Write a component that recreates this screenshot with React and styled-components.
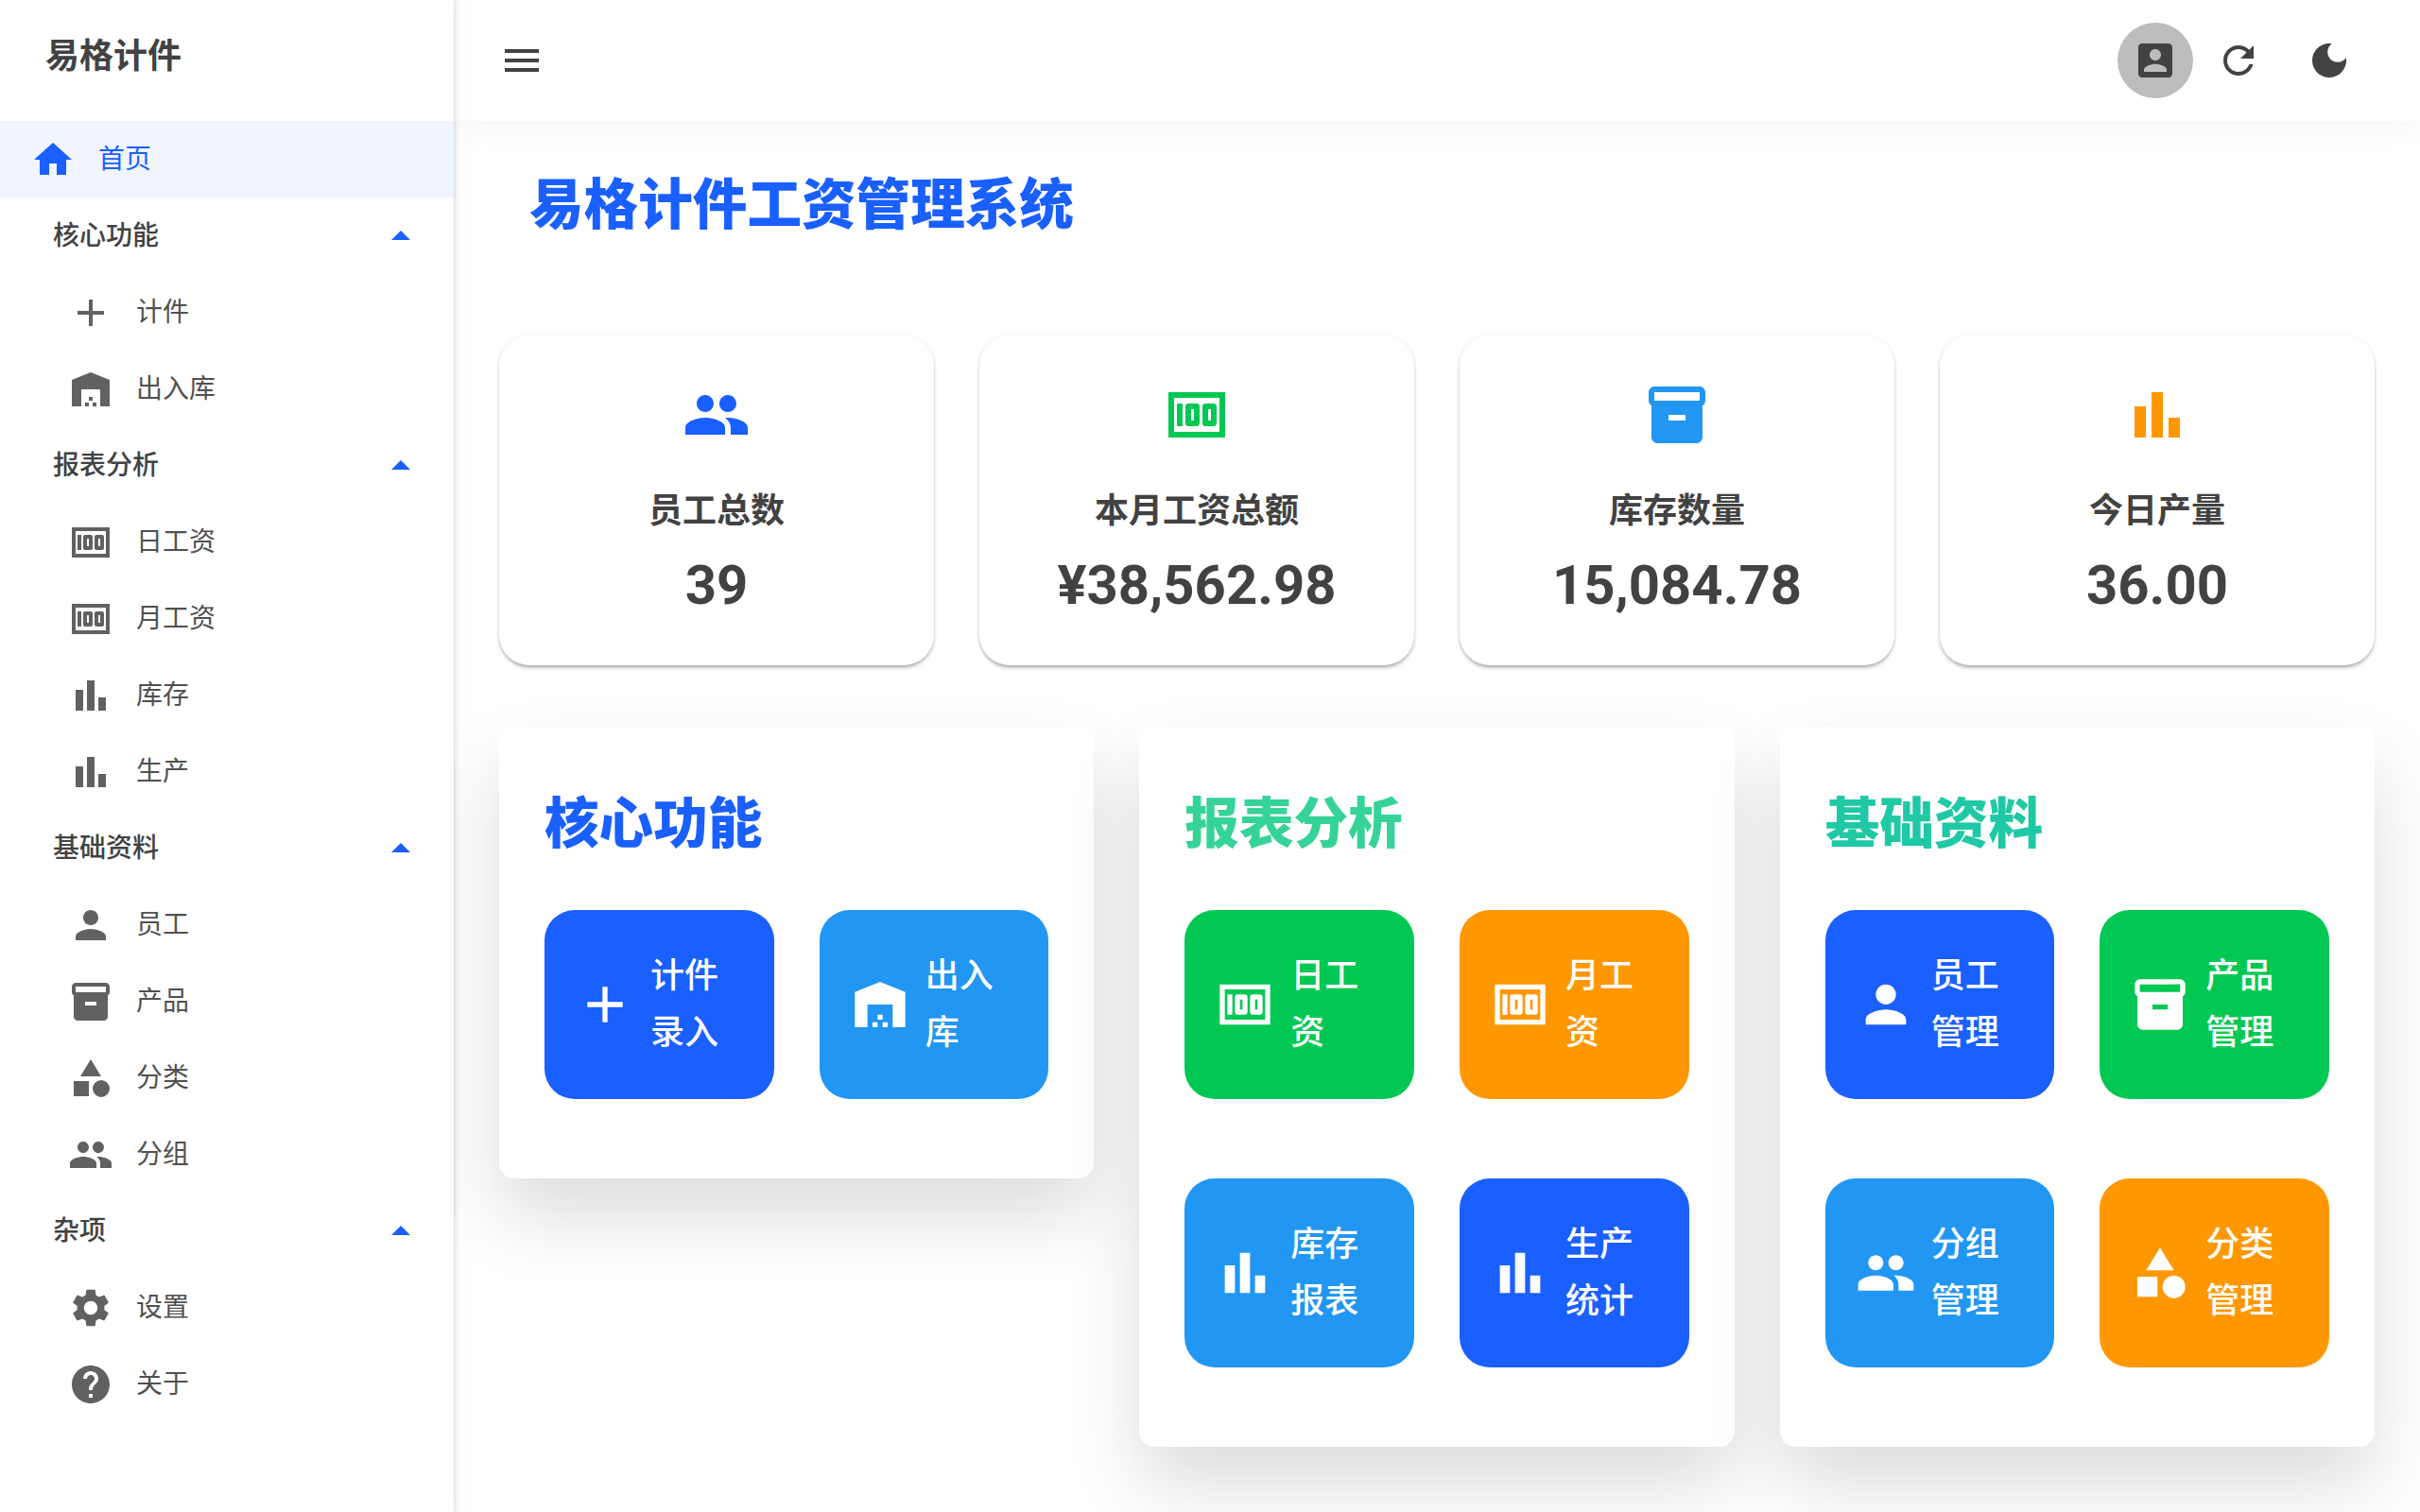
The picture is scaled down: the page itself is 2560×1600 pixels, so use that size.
import React from 'react';
import styled, { createGlobalStyle } from 'styled-components';

const BLUE = '#1a5fff';
const SKY = '#2196f3';
const GREEN = '#00c853';
const ORANGE = '#ff9800';

// material icon paths, 24 grid
const ICONS = {
  home: 'M10 20v-6h4v6h5v-8h3L12 3 2 12h3v8z',
  up: 'M7 14l5-5 5 5z',
  add: 'M19 13h-6v6h-2v-6H5v-2h6V5h2v6h6v2z',
  warehouse: 'M22 21V7L12 3 2 7v14h5v-9h10v9h5zm-11-2H9v2h2v-2zm2-3h-2v2h2v-2zm2 3h-2v2h2v-2z',
  money: 'M5 8h2v8H5zm7 0H9c-.55 0-1 .45-1 1v6c0 .55.45 1 1 1h3c.55 0 1-.45 1-1V9c0-.55-.45-1-1-1zm-1 6h-1v-4h1v4zm7-6h-3c-.55 0-1 .45-1 1v6c0 .55.45 1 1 1h3c.55 0 1-.45 1-1V9c0-.55-.45-1-1-1zm-1 6h-1v-4h1v4zM2 4v16h20V4H2zm2 14V6h16v12H4z',
  bar: 'M4 9h4v11H4zM16 13h4v7h-4zM10 4h4v16h-4z',
  person: 'M12 12c2.21 0 4-1.79 4-4s-1.79-4-4-4-4 1.79-4 4 1.79 4 4 4zm0 2c-2.67 0-8 1.34-8 4v2h16v-2c0-2.66-5.33-4-8-4z',
  box: 'M20 2H4c-1 0-2 .9-2 2v3.01c0 .72.43 1.34 1 1.69V20c0 1.1 1.1 2 2 2h14c.9 0 2-.9 2-2V8.7c.57-.35 1-.97 1-1.69V4c0-1.1-1-2-2-2zm-5 12H9v-2h6v2zm5-7H4V4l16-.02V7z',
  category: 'M12 2l-5.5 9h11zM17.5 13a4.5 4.5 0 1 0 0 9 4.5 4.5 0 0 0 0-9zM3 13.5h8v8H3z',
  group: 'M16 11c1.66 0 2.99-1.34 2.99-3S17.66 5 16 5c-1.66 0-3 1.34-3 3s1.34 3 3 3zm-8 0c1.66 0 2.99-1.34 2.99-3S9.66 5 8 5C6.34 5 5 6.34 5 8s1.34 3 3 3zm0 2c-2.33 0-7 1.17-7 3.5V19h14v-2.5c0-2.33-4.67-3.5-7-3.5zm8 0c-.29 0-.62.02-.97.05 1.16.84 1.97 1.97 1.97 3.45V19h6v-2.5c0-2.33-4.67-3.5-7-3.5z',
  settings: 'M19.14 12.94c.04-.3.06-.61.06-.94 0-.32-.02-.64-.07-.94l2.03-1.58c.18-.14.23-.41.12-.61l-1.92-3.32c-.12-.22-.37-.29-.59-.22l-2.39.96c-.5-.38-1.03-.7-1.62-.94l-.36-2.54c-.04-.24-.24-.41-.48-.41h-3.84c-.24 0-.43.17-.47.41l-.36 2.54c-.59.24-1.13.57-1.62.94l-2.39-.96c-.22-.08-.47 0-.59.22L2.74 8.87c-.12.21-.08.47.12.61l2.03 1.58c-.05.3-.09.63-.09.94s.02.64.07.94l-2.03 1.58c-.18.14-.23.41-.12.61l1.92 3.32c.12.22.37.29.59.22l2.39-.96c.5.38 1.03.7 1.62.94l.36 2.54c.05.24.24.41.48.41h3.84c.24 0 .44-.17.47-.41l.36-2.54c.59-.24 1.13-.56 1.62-.94l2.39.96c.22.08.47 0 .59-.22l1.92-3.32c.12-.22.07-.47-.12-.61l-2.01-1.58zM12 15.6c-1.98 0-3.6-1.62-3.6-3.6s1.62-3.6 3.6-3.6 3.6 1.62 3.6 3.6-1.62 3.6-3.6 3.6z',
  help: 'M12 2C6.48 2 2 6.48 2 12s4.48 10 10 10 10-4.48 10-10S17.52 2 12 2zm1 17h-2v-2h2v2zm2.07-7.75l-.9.92C13.45 12.9 13 13.5 13 15h-2v-.5c0-1.1.45-2.1 1.17-2.83l1.24-1.26c.37-.36.59-.86.59-1.41 0-1.1-.9-2-2-2s-2 .9-2 2H8c0-2.21 1.79-4 4-4s4 1.79 4 4c0 .88-.36 1.68-.93 2.25z',
  menu: 'M3 18h18v-2H3v2zm0-5h18v-2H3v2zm0-7v2h18V6H3z',
  account: 'M3 5v14c0 1.1.89 2 2 2h14c1.1 0 2-.9 2-2V5c0-1.1-.9-2-2-2H5c-1.11 0-2 .9-2 2zm12 4c0 1.66-1.34 3-3 3s-3-1.34-3-3 1.34-3 3-3 3 1.34 3 3zm-9 8c0-2 4-3.1 6-3.1s6 1.1 6 3.1v1H6v-1z',
  refresh: 'M17.65 6.35C16.2 4.9 14.21 4 12 4c-4.42 0-7.99 3.58-7.99 8s3.57 8 7.99 8c3.73 0 6.84-2.55 7.73-6h-2.08c-.82 2.33-3.04 4-5.65 4-3.31 0-6-2.69-6-6s2.69-6 6-6c1.66 0 3.14.69 4.22 1.78L13 11h7V4l-2.35 2.35z',
  moon: 'M12 3c-4.97 0-9 4.03-9 9s4.03 9 9 9 9-4.03 9-9c0-.46-.04-.92-.1-1.36-.98 1.37-2.58 2.26-4.4 2.26-2.98 0-5.4-2.42-5.4-5.4 0-1.81.89-3.42 2.26-4.4-.44-.06-.9-.1-1.36-.1z',
};

const NAV = [
  {
    title: '核心功能',
    items: [
      { icon: 'add', label: '计件' },
      { icon: 'warehouse', label: '出入库' },
    ],
  },
  {
    title: '报表分析',
    items: [
      { icon: 'money', label: '日工资' },
      { icon: 'money', label: '月工资' },
      { icon: 'bar', label: '库存' },
      { icon: 'bar', label: '生产' },
    ],
  },
  {
    title: '基础资料',
    items: [
      { icon: 'person', label: '员工' },
      { icon: 'box', label: '产品' },
      { icon: 'category', label: '分类' },
      { icon: 'group', label: '分组' },
    ],
  },
  {
    title: '杂项',
    items: [
      { icon: 'settings', label: '设置' },
      { icon: 'help', label: '关于' },
    ],
  },
];

const STATS = [
  { icon: 'group', color: BLUE, label: '员工总数', value: '39' },
  { icon: 'money', color: GREEN, label: '本月工资总额', value: '¥38,562.98' },
  { icon: 'box', color: SKY, label: '库存数量', value: '15,084.78' },
  { icon: 'bar', color: ORANGE, label: '今日产量', value: '36.00' },
];

const SECTIONS = [
  {
    title: '核心功能',
    color: BLUE,
    actions: [
      { icon: 'add', label: '计件录入', color: BLUE },
      { icon: 'warehouse', label: '出入库', color: SKY },
    ],
  },
  {
    title: '报表分析',
    color: '#36d399',
    actions: [
      { icon: 'money', label: '日工资', color: GREEN },
      { icon: 'money', label: '月工资', color: ORANGE },
      { icon: 'bar', label: '库存报表', color: SKY },
      { icon: 'bar', label: '生产统计', color: BLUE },
    ],
  },
  {
    title: '基础资料',
    color: '#20c9a5',
    actions: [
      { icon: 'person', label: '员工管理', color: BLUE },
      { icon: 'box', label: '产品管理', color: GREEN },
      { icon: 'group', label: '分组管理', color: SKY },
      { icon: 'category', label: '分类管理', color: ORANGE },
    ],
  },
];

const GlobalStyle = createGlobalStyle`
  html, body {
    margin: 0;
    height: 100%;
    overflow: hidden;
    background: #fff;
  }
  body {
    font-family: Roboto, "Noto Sans CJK SC", sans-serif;
    color: #424242;
  }
  * {
    box-sizing: border-box;
  }
`;

const Layout = styled.div`
  display: grid;
  grid-template-columns: 480px 1fr;
  height: 1600px;
`;

const Sidebar = styled.aside`
  position: relative;
  z-index: 2;
  background: #fff;
  box-shadow: 2px 0 4px rgba(0, 0, 0, 0.12), 0 0 40px rgba(0, 0, 0, 0.03);
`;

const Brand = styled.div`
  height: 128px;
  padding: 0 48px 8px;
  display: flex;
  align-items: center;
  font-size: 36px;
  line-height: 44px;
  font-weight: 700;
`;

const NavRow = styled.div`
  height: 81px;
  display: flex;
  align-items: center;
  gap: 24px;
  font-size: 28px;
  line-height: 42px;
`;

const HomeRow = styled(NavRow)`
  padding-left: 32px;
  background: #f0f5ff;
  color: ${BLUE};
`;

const GroupRow = styled(NavRow)`
  padding: 0 32px 0 56px;
  justify-content: space-between;
  font-weight: 500;
`;

const SubRow = styled(NavRow)`
  padding-left: 72px;
  color: #505050;
`;

const Svg = styled.svg`
  flex: none;
  display: block;
  width: ${(p) => p.$size || 48}px;
  height: ${(p) => p.$size || 48}px;
  fill: ${(p) => p.$color || 'currentColor'};
`;

const Icon = ({ name, size, color }) => (
  <Svg viewBox="0 0 24 24" $size={size} $color={color}>
    <path d={ICONS[name]} />
  </Svg>
);

const Page = styled.div`
  min-width: 0;
  display: flex;
  flex-direction: column;
`;

const Header = styled.header`
  height: 128px;
  flex: none;
  display: flex;
  align-items: center;
  padding: 0 72px 0 48px;
  background: #fff;
  box-shadow: 0 8px 32px rgba(0, 0, 0, 0.04);
  position: relative;
  z-index: 1;
`;

const Spacer = styled.div`
  flex: 1;
`;

const Avatar = styled.div`
  width: 80px;
  height: 80px;
  border-radius: 50%;
  background: #bdbdbd;
  display: flex;
  align-items: center;
  justify-content: center;
`;

const HeaderIcon = styled.div`
  margin-left: ${(p) => p.$gap}px;
`;

const Content = styled.main`
  flex: 1;
  padding: 50px 48px 48px;
`;

const Heading = styled.h1`
  margin: 0 0 97px;
  padding-left: 32px;
  font-size: 57.6px;
  line-height: 80px;
  font-weight: 900;
  color: ${BLUE};
`;

const StatGrid = styled.div`
  display: grid;
  grid-template-columns: repeat(4, 1fr);
  gap: 48px;
  margin-bottom: 65px;
`;

const StatCard = styled.div`
  height: 349px;
  padding-top: 48px;
  display: flex;
  flex-direction: column;
  align-items: center;
  background: #fff;
  border-radius: 32px;
  box-shadow: 0 3px 4px -1px rgba(0, 0, 0, 0.36), 0 0 4px rgba(0, 0, 0, 0.05);
`;

const StatLabel = styled.div`
  margin-top: 39px;
  font-size: 36px;
  line-height: 54px;
  font-weight: 700;
`;

const StatValue = styled.div`
  margin-top: 16px;
  font-size: 58px;
  line-height: 70px;
  font-weight: 700;
`;

const SectionGrid = styled.div`
  display: grid;
  grid-template-columns: repeat(3, 1fr);
  gap: 48px;
  align-items: start;
`;

const Section = styled.section`
  padding: 48px 48px 84px;
  background: #fff;
  border-radius: 16px;
  box-shadow: 0 40px 80px rgba(0, 0, 0, 0.14);
`;

const SectionTitle = styled.h2`
  margin: 0 0 34px;
  font-size: 57.6px;
  line-height: 112px;
  font-weight: 900;
  color: ${(p) => p.$color};
`;

const ActionGrid = styled.div`
  display: grid;
  grid-template-columns: 1fr 1fr;
  column-gap: 48px;
  row-gap: 84px;
`;

const ActionButton = styled.button`
  height: 200px;
  padding: 0 32px;
  border: none;
  border-radius: 32px;
  display: flex;
  align-items: center;
  gap: 16px;
  background: ${(p) => p.$color};
  color: #fff;
  font: inherit;
  font-size: 36px;
  font-weight: 500;
  line-height: 60px;
  text-align: left;
`;

export default function App() {
  return (
    <>
      <GlobalStyle />
      <Layout>
        <Sidebar>
          <Brand>易格计件</Brand>
          <HomeRow>
            <Icon name="home" />
            首页
          </HomeRow>
          {NAV.map((group) => (
            <div key={group.title}>
              <GroupRow>
                {group.title}
                <Icon name="up" color={BLUE} />
              </GroupRow>
              {group.items.map((item) => (
                <SubRow key={item.label}>
                  <Icon name={item.icon} color="#616161" />
                  {item.label}
                </SubRow>
              ))}
            </div>
          ))}
        </Sidebar>
        <Page>
          <Header>
            <Icon name="menu" />
            <Spacer />
            <Avatar>
              <Icon name="account" />
            </Avatar>
            <HeaderIcon $gap={24}>
              <Icon name="refresh" />
            </HeaderIcon>
            <HeaderIcon $gap={48}>
              <Icon name="moon" />
            </HeaderIcon>
          </Header>
          <Content>
            <Heading>易格计件工资管理系统</Heading>
            <StatGrid>
              {STATS.map((stat) => (
                <StatCard key={stat.label}>
                  <Icon name={stat.icon} size={72} color={stat.color} />
                  <StatLabel>{stat.label}</StatLabel>
                  <StatValue>{stat.value}</StatValue>
                </StatCard>
              ))}
            </StatGrid>
            <SectionGrid>
              {SECTIONS.map((section) => (
                <Section key={section.title}>
                  <SectionTitle $color={section.color}>{section.title}</SectionTitle>
                  <ActionGrid>
                    {section.actions.map((action) => (
                      <ActionButton key={action.label} $color={action.color}>
                        <Icon name={action.icon} size={64} />
                        <span>{action.label}</span>
                      </ActionButton>
                    ))}
                  </ActionGrid>
                </Section>
              ))}
            </SectionGrid>
          </Content>
        </Page>
      </Layout>
    </>
  );
}
